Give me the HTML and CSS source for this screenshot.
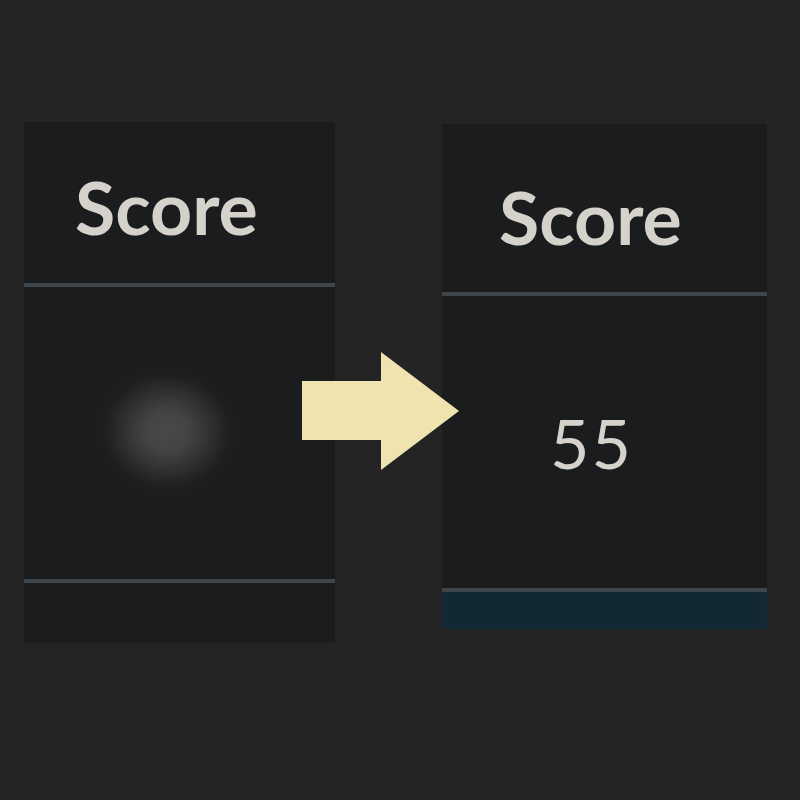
FILE: index.html
```html
<!DOCTYPE html>
<html>
<head>
<meta charset="utf-8">
<link rel="stylesheet" href="styles.css">
</head>
<body>
<div class="stage">
  <div class="card card-left">
    <div class="head head-left"><span class="title">Score</span></div>
    <div class="sep"></div>
    <div class="body"><div class="glow"></div></div>
    <div class="sep"></div>
    <div class="foot foot-left"></div>
  </div>
  <div class="card card-right">
    <div class="head head-right"><span class="title">Score</span></div>
    <div class="sep"></div>
    <div class="body"><span class="value">55</span></div>
    <div class="sep"></div>
    <div class="foot foot-right"></div>
  </div>
  <svg class="arrow" width="158" height="119" viewBox="0 0 158 119">
    <polygon points="0,29 79,29 79,0 157,59 79,118 79,88 0,88" fill="#efe3b0"/>
  </svg>
</div>
</body>
</html>
```
FILE: styles.css
```css
html, body {
  margin: 0;
  padding: 0;
  background: #242424;
  width: 800px;
  height: 800px;
  overflow: hidden;
}
.stage {
  position: relative;
  display: flex;
  align-items: flex-start;
  padding: 122px 0 0 24px;
  gap: 107px;
  font-family: Lato, "Open Sans", sans-serif;
}
.card {
  background: #1b1c1e;
  display: flex;
  flex-direction: column;
}
.card-left { width: 311px; }
.card-right { width: 325px; margin-top: 2px; }
.head {
  display: flex;
  align-items: flex-start;
  box-sizing: border-box;
}
.head-left { height: 161px; padding: 40px 0 0 51px; }
.head-right { height: 168px; padding: 48px 0 0 57px; }
.title {
  font-weight: 700;
  font-size: 73.5px;
  line-height: 90px;
  color: #d5d2cb;
}
.sep {
  height: 4px;
  background: #3e464b;
}
.body {
  height: 292px;
  display: flex;
  align-items: center;
  justify-content: center;
  position: relative;
}
.glow {
  width: 150px;
  height: 136px;
  margin: 0 20px 0 0;
  position: relative;
  top: -2px;
  left: -3px;
  background: radial-gradient(closest-side, rgba(72,73,72,1) 0%, rgba(68,69,68,0.95) 30%, rgba(58,59,59,0.6) 60%, rgba(40,41,42,0.25) 82%, rgba(27,28,30,0) 100%);
}
.value {
  font-size: 68px;
  color: #d5d2cb;
  font-weight: 400;
  letter-spacing: 2px;
  margin: 0 26px 0 0;
  position: relative;
}
.foot-left { height: 60px; }
.foot-right { height: 37px; background: #122934; }
.arrow {
  position: absolute;
  left: 302px;
  top: 352px;
}
```
